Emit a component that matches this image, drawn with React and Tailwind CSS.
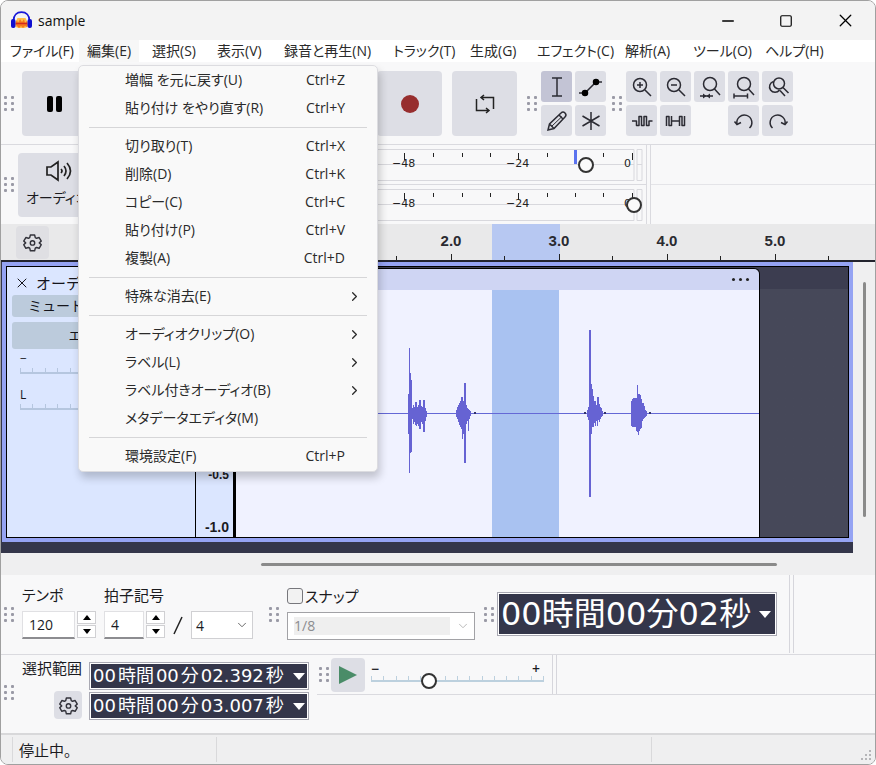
import { Fragment } from "react";
import { ChevronDown, ChevronRight, Minus, Square, X } from "lucide-react";

const MENUS = [
    { label: "ファイル(F)", width: "w-[77px]" },
    { label: "編集(E)", width: "w-[65px]", open: true },
    { label: "選択(S)", width: "w-[65px]" },
    { label: "表示(V)", width: "w-[67px]" },
    { label: "録音と再生(N)", width: "w-[109px]" },
    { label: "トラック(T)", width: "w-[77px]" },
    { label: "生成(G)", width: "w-[67px]" },
    { label: "エフェクト(C)", width: "w-[88px]" },
    { label: "解析(A)", width: "w-[68px]" },
    { label: "ツール(O)", width: "w-[72px]" },
    { label: "ヘルプ(H)", width: "w-[72px]" },
];

const EDIT_MENU = [
    [
        { label: "増幅 を元に戻す(U)", keys: "Ctrl+Z" },
        { label: "貼り付け をやり直す(R)", keys: "Ctrl+Y" },
    ],
    [
        { label: "切り取り(T)", keys: "Ctrl+X" },
        { label: "削除(D)", keys: "Ctrl+K" },
        { label: "コピー(C)", keys: "Ctrl+C" },
        { label: "貼り付け(P)", keys: "Ctrl+V" },
        { label: "複製(A)", keys: "Ctrl+D" },
    ],
    [{ label: "特殊な消去(E)", submenu: true }],
    [
        { label: "オーディオクリップ(O)", submenu: true },
        { label: "ラベル(L)", submenu: true },
        { label: "ラベル付きオーディオ(B)", submenu: true },
        { label: "メタデータエディタ(M)" },
    ],
    [{ label: "環境設定(F)", keys: "Ctrl+P" }],
];

// [first x, [peak above, peak below] for each pixel column]
const BURSTS = [
    [172, [[19, 20], [65, 59], [40, 39], [33, 38], [5, 5], [8, 10], [6, 8], [11, 11], [11, 12], [6, 10], [8, 12], [13, 15], [13, 15], [7, 8], [6, 10], [13, 18], [13, 18], [5, 7], [2, 3]]],
    [220, [[3, 3], [6, 5], [8, 8], [10, 11], [12, 13], [16, 15], [16, 25], [12, 20], [30, 49], [30, 49], [8, 10], [5, 7], [4, 17], [3, 5], [2, 2]]],
    [351, [[3, 3], [6, 6], [83, 83], [83, 83], [29, 20], [24, 13], [17, 13], [12, 9], [12, 12], [8, 7], [16, 12], [16, 6], [9, 8], [6, 5], [5, 3], [2, 2]]],
    [395, [[12, 12], [14, 13], [15, 13], [15, 13], [15, 13], [15, 17], [28, 18], [19, 21], [19, 17], [18, 15], [14, 14], [10, 7], [10, 5], [7, 4], [3, 3], [2, 2]]],
];

function Grip() {
    return (
        <svg width="10" height="17" viewBox="0 0 10 17" className="shrink-0" fill="#9a9aa6" aria-hidden="true">
            {[1, 7, 13].map((y) => (
                <Fragment key={y}>
                    <rect x="0" y={y} width="3" height="3" rx="1" />
                    <rect x="7" y={y} width="3" height="3" rx="1" />
                </Fragment>
            ))}
        </svg>
    );
}

function BigButton({ label, children }) {
    return (
        <button aria-label={label} className="flex size-[65px] shrink-0 items-center justify-center rounded-sm bg-[#dddee5]">
            {children}
        </button>
    );
}

function ToolButton({ label, active, children }) {
    return (
        <button
            aria-label={label}
            className={`flex size-[31px] items-center justify-center rounded-[3px] ${active ? "bg-[#c3c4d5]" : "bg-[#dddee5]"}`}
        >
            <svg width="28" height="28" viewBox="0 0 28 28" fill="none" stroke="#2b2b33" strokeWidth="1.5">
                {children}
            </svg>
        </button>
    );
}

function Gear() {
    return (
        <svg width="19" height="19" viewBox="0 0 24 24" fill="none" stroke="#33333b" strokeWidth="1.8" strokeLinejoin="round">
            <path d="M9.3 2.5h5.4l.8 3.3 1.6.9 3.3-1 2.7 4.5-2.5 2.3 2.5 2.3-2.7 4.5-3.3-1-1.6.9-.8 3.3H9.3l-.8-3.3-1.6-.9-3.3 1L.9 14.800l2.5-2.3L.9 10.200l2.7-4.5 3.300 1 1.600-.9z" />
            <circle cx="12" cy="12.5" r="2.8" />
        </svg>
    );
}

function TitleBar() {
    return (
        <header className="flex h-[39px] shrink-0 items-center bg-[#f3f3f3] pl-2.5 text-[14px] text-[#111]">
            <svg width="21" height="19" viewBox="0 0 21 19" aria-hidden="true">
                <path d="M4.500 11l2-4 8 0 2 4v5l-3 1h-6l-3-1z" fill="#ffc04a" />
                <path d="M4 13l2-4 1 3 2-4 2 3 2-3 1 4 2-2 1 3-1 3-2-1-2 2-2-2-2 2-2-2z" fill="#f7791e" />
                <path d="M5 12.500h11" stroke="#d22b1e" strokeWidth="1.500" />
                <path d="M2.500 10C2.500 4 6 1.200 10.500 1.200S18.500 4 18.500 10" fill="none" stroke="#1818d8" strokeWidth="1.800" />
                <rect x="0" y="8" width="4.500" height="9" rx="2" fill="#1010d0" />
                <rect x="16.500" y="8" width="4.500" height="9" rx="2" fill="#1010d0" />
            </svg>
            <h1 className="ml-1.5 flex-1">sample</h1>
            <button aria-label="最小化" className="flex h-full w-[58px] items-center justify-center">
                <Minus size={18} strokeWidth={2} className="text-black" />
            </button>
            <button aria-label="最大化" className="flex h-full w-[58px] items-center justify-center">
                <Square size={14} strokeWidth={2} className="text-black" />
            </button>
            <button aria-label="閉じる" className="flex h-full w-[60px] items-center justify-center">
                <X size={21} strokeWidth={1.5} className="text-black" />
            </button>
        </header>
    );
}

function EditMenu() {
    return (
        <div
            role="menu"
            className="absolute top-[25px] -left-[9px] z-20 w-[300px] rounded-[5px] border border-[#dcdce0] bg-[#f9f9f9] pb-px shadow-[2px_6px_9px_rgba(0,0,0,0.2)]"
        >
            {EDIT_MENU.map((group, i) => (
                <Fragment key={i}>
                    {i > 0 && (
                        <div className="flex h-2.5 items-center px-2.5">
                            <hr className="w-full border-[#d6d6d8]" />
                        </div>
                    )}
                    {group.map((item) => (
                        <button
                            key={item.label}
                            role="menuitem"
                            className="flex h-7 w-full items-center pl-[46px] text-left"
                        >
                            <span className="flex-1">{item.label}</span>
                            {item.keys && <span className="pr-8">{item.keys}</span>}
                            {item.submenu && <ChevronRight size={15} strokeWidth={2} className="mr-[15px]" />}
                        </button>
                    ))}
                </Fragment>
            ))}
        </div>
    );
}

function MenuBar() {
    return (
        <nav className="h-[23px] shrink-0 bg-[#f8f8f9]">
            <div className="flex h-[22px] bg-white pl-[9px] text-[14px] leading-[22px] whitespace-nowrap text-[#2a2a2a] [font-feature-settings:'palt']">
                {MENUS.map((menu) => (
                    <div key={menu.label} className={`relative shrink-0 ${menu.width}`}>
                        <button className={menu.open ? "-ml-2 bg-[#f7f7f7] px-2" : ""}>{menu.label}</button>
                        {menu.open && <EditMenu />}
                    </div>
                ))}
            </div>
        </nav>
    );
}

function Transport() {
    return (
        <div className="flex h-[82px] shrink-0 items-center border-b border-[#dadadf] pl-[3px]">
            <Grip />
            <div className="ml-2 flex gap-1.5">
                <BigButton label="一時停止">
                    <svg width="16" height="16" fill="#000">
                        <rect width="6" height="16" rx="2" />
                        <rect x="9" width="6" height="16" rx="2" />
                    </svg>
                </BigButton>
                <BigButton label="再生">
                    <svg width="18" height="18" fill="#4a8c68"><path d="M0 0l18 9-18 9z" /></svg>
                </BigButton>
                <BigButton label="停止">
                    <svg width="16" height="16"><rect width="16" height="16" /></svg>
                </BigButton>
                <BigButton label="先頭へ">
                    <svg width="18" height="16"><path d="M0 0h3v16H0zM18 0v16L4 8z" /></svg>
                </BigButton>
                <BigButton label="末尾へ">
                    <svg width="18" height="16"><path d="M15 0h3v16h-3zM0 0v16l14-8z" /></svg>
                </BigButton>
                <BigButton label="録音">
                    <span className="size-[18px] rounded-full bg-[#972e2e]" />
                </BigButton>
            </div>
            <div className="ml-2.5">
                <BigButton label="ループ">
                    <svg width="20" height="20" viewBox="0 0 20 20" fill="none" stroke="#222" strokeWidth="1.500">
                        <path d="M18.500 15V3.500H6.500M9 1L6 3.500 9 6" />
                        <path d="M1.500 5v11.500h12M11 14l3 2.500-3 2.500" />
                    </svg>
                </BigButton>
            </div>
            <div className="ml-2.5"><Grip /></div>
            <div className="ml-1 grid shrink-0 grid-cols-2 gap-[3px]">
                <ToolButton label="選択ツール" active>
                    <path d="M9 5h10M9 23h10M14 5v18" />
                </ToolButton>
                <ToolButton label="エンベロープツール">
                    <path d="M2 20h6L19 9h6" />
                    <circle cx="8" cy="20" r="2.500" fill="#000" stroke="#000" />
                    <circle cx="19" cy="9" r="2.500" fill="#000" stroke="#000" />
                </ToolButton>
                <ToolButton label="描画ツール">
                    <path d="M5 23l1.500-6L18 6q2-2 4 0t0 4L11 21.500zM16 8l4 4M6.500 17l4.500 4.500" />
                    <path d="M9 19L19 9.500" strokeWidth="1" />
                </ToolButton>
                <ToolButton label="マルチツール">
                    <path d="M14 5v18M5.500 9l17 10M22.500 9l-17 10" />
                </ToolButton>
            </div>
            <div className="ml-1.5"><Grip /></div>
            <div className="ml-1 grid shrink-0 grid-cols-5 gap-[3px]">
                <ToolButton label="ズームイン">
                    <circle cx="12" cy="12" r="6.500" />
                    <path d="M17 17l6 6M9 12h6M12 9v6" />
                </ToolButton>
                <ToolButton label="ズームアウト">
                    <circle cx="12" cy="12" r="6.500" />
                    <path d="M17 17l6 6M9 12h6" />
                </ToolButton>
                <ToolButton label="選択範囲に合わせる">
                    <circle cx="14" cy="11" r="6.500" />
                    <path d="M18.500 16l5.500 6M4 23h13" />
                    <path d="M7 20.500l3.500 2.500L7 25.500zM14 20.500L10.500 23l3.500 2.500z" fill="#2b2b33" stroke="none" />
                </ToolButton>
                <ToolButton label="プロジェクトに合わせる">
                    <circle cx="14" cy="11" r="6.500" />
                    <path d="M18.500 16l5.500 6M4 23h13M4 20.500v5M17.500 20.500v5" />
                </ToolButton>
                <ToolButton label="ズーム切り替え">
                    <circle cx="15" cy="10.500" r="5.500" />
                    <path d="M19 14.500l5.500 5.500M9.500 8.500A5.500 5.500 0 1 0 15.500 17M14.500 17.500M16 17.500l5 5.500" />
                </ToolButton>
                <ToolButton label="トリム">
                    <path d="M4 14h4.500v4.500h2.500v-9h2.500v9H16v-9h2.500v9H21V14h3.500" strokeLinejoin="round" />
                </ToolButton>
                <ToolButton label="無音化">
                    <path d="M4.500 19V9.500H7v9h2.500V9M9.500 14h8M17.500 19V9.500H20v9h2.500V9" strokeLinejoin="round" />
                </ToolButton>
                <span />
                <ToolButton label="元に戻す">
                    <path d="M7 17a7.500 7.500 0 1 1 12.500 4" />
                    <path d="M4.500 14.500L7 17.500l4-2" />
                </ToolButton>
                <ToolButton label="やり直す">
                    <path d="M21 17a7.500 7.500 0 1 0-12.500 4" />
                    <path d="M23.500 14.500L21 17.500l-4-2" />
                </ToolButton>
            </div>
        </div>
    );
}

function Meter({ label, value, level }) {
    const ticks = [1, 29, 58, 87, 115, 143, 172, 200, 228, 257];
    return (
        <div className="relative h-8 w-[269px]">
            <svg width="269" height="32" viewBox="0 0 269 32" fill="none" className="font-['DejaVu_Sans',sans-serif]">
                <path d="M0 .500h258v31H0M0 15.500h258M261 .500h5v31h-5zM261 15.500h5" stroke="#d8d8dd" />
                {ticks.map((x, i) => (
                    <path key={x} d={`M${x - 0.5} 4v${[1, 5, 9].includes(i) ? 7 : 4}`} stroke="#222" />
                ))}
                {level && <path d="M199.500 1v14" stroke="#5b73ef" strokeWidth="3" />}
                <g fill="#222" fontSize="11">
                    <text x="16" y="18">−48</text>
                    <text x="130" y="18">−24</text>
                    <text x="248" y="18">0</text>
                </g>
            </svg>
            <input
                type="range"
                aria-label={label}
                min="0"
                max="100"
                defaultValue={value}
                className="absolute inset-x-0 top-2 h-4 w-full appearance-none bg-transparent [&::-webkit-slider-thumb]:size-4 [&::-webkit-slider-thumb]:appearance-none [&::-webkit-slider-thumb]:rounded-full [&::-webkit-slider-thumb]:border-2 [&::-webkit-slider-thumb]:border-[#333] [&::-webkit-slider-thumb]:bg-[#fafafa]"
            />
        </div>
    );
}

function MeterBar() {
    return (
        <div className="flex h-[79px] shrink-0">
            <div className="flex w-[375px] items-center pl-[3px]">
                <Grip />
                <button className="ml-1 flex h-16 w-28 flex-col items-start justify-center gap-1 rounded-sm bg-[#dddee5] pl-2 text-[14px] leading-6 whitespace-nowrap [font-feature-settings:'palt']">
                    <svg width="28" height="22" viewBox="0 0 28 22" fill="none" stroke="#222" strokeWidth="1.700" className="ml-[19px]">
                        <path d="M2 7h4l7-5v18l-7-5H2zM16 9q2 2 0 4M19 6q4 5 0 10M22 3q7 8 0 16" />
                    </svg>
                    オーディオ設定
                </button>
            </div>
            <div className="flex w-[275px] flex-col border-r border-[#dadadf]">
                <div className="mr-[3px] flex flex-1 items-center border-r border-b border-[#dadadf]">
                    <Meter label="録音レベル" value="80" level />
                </div>
                <div className="mr-[3px] flex flex-1 items-center border-r border-[#dadadf]">
                    <Meter label="再生レベル" value="99" />
                </div>
            </div>
            <div className="flex-1">
                <div className="h-10 border-b border-[#e4e4e8]" />
            </div>
        </div>
    );
}

function TimeRuler() {
    return (
        <div className="relative flex h-[38px] shrink-0 overflow-hidden border-b-2 border-[#22232d] bg-[#e9e9ea]">
            <div className="flex w-[180px] shrink-0 items-center pl-[15px]">
                <button aria-label="タイムライン設定" className="flex size-[33px] items-center justify-center rounded-sm bg-[#dfdfe3]">
                    <Gear />
                </button>
            </div>
            <div className="absolute inset-y-0 left-[491px] w-[68px] bg-[#b7c8f2]" />
            {["", "", "2.0", "3.0", "4.0", "5.0"].map((second, i) => (
                <div key={i} className="relative flex w-[108px] shrink-0 flex-col items-center justify-end gap-[5px] font-['Liberation_Sans',sans-serif] text-[15px] leading-4 font-bold text-[#2a2a30]">
                    {second}
                    <span className="flex w-full items-end justify-between">
                        <i className="w-px" />
                        <i className="h-1.5 w-px bg-[#222]" />
                        <i className="h-1 w-px bg-[#222]" />
                    </span>
                </div>
            ))}
        </div>
    );
}

function PanelSlider({ children }) {
    return (
        <div className="h-9 px-2 text-[12px] leading-3">
            {children}
            <div className="mt-[3px] flex h-1.5 justify-between border-b-2 border-[#b5c6df]">
                {[0, 1, 2, 3, 4, 5, 6, 7, 8, 9, 10, 11, 12, 13].map((n) => (
                    <i key={n} className="h-1 w-px bg-[#b5c6df]" />
                ))}
            </div>
        </div>
    );
}

function TrackPanel() {
    return (
        <aside className="w-[189px] shrink-0 overflow-hidden border-r border-black bg-[#dbe6ff] px-[5px] pt-1 text-[15px] whitespace-nowrap text-[#15151c]">
            <div className="flex h-6 items-center gap-1.5 pl-0.5">
                <button aria-label="トラックを閉じる"><X size={16} strokeWidth={1.5} /></button>
                オーディオ
            </div>
            <div className="flex gap-0.5 text-[14px] leading-[22px]">
                <button className="flex-1 rounded-[3px] bg-[#bccbdc]">ミュート</button>
                <button aria-label="ソロ" className="flex-1 rounded-[3px] bg-[#bccbdc]" />
            </div>
            <button className="mt-[5px] mb-1 h-[27px] w-full rounded-[3px] bg-[#bccbdc] text-[13px]">エフェクト</button>
            <PanelSlider>−</PanelSlider>
            <PanelSlider>L</PanelSlider>
        </aside>
    );
}

function Waveform() {
    return (
        <svg viewBox="0 0 523 247" preserveAspectRatio="none" className="block min-h-0 w-full flex-1 bg-[#f0f2ff]" shapeRendering="crispEdges">
            <rect x="256" width="67" height="247" fill="#a9c2f1" />
            <rect y="123" width="523" height="1" fill="#6468d6" />
            {BURSTS.map(([start, peaks]) =>
                peaks.map(([up, down], i) => (
                    <rect key={start + i} x={start + i} y={123 - up} width="1" height={up + down + 1} fill="#6663d3" />
                ))
            )}
            {[238, 348, 368, 413].map((x) => (
                <rect key={x} x={x} y="122" width="2" height="2" fill="#33336b" />
            ))}
        </svg>
    );
}

function TrackArea() {
    return (
        <main className="flex min-h-[290px] flex-1 bg-[#efeff0]">
            <div className="flex min-w-0 flex-1 flex-col border-b-11 border-l border-[#34364a]">
                <div className="flex min-h-0 flex-1 border-4 border-[#95a3f3]">
                    <div className="flex min-w-0 flex-1 border border-black">
                        <TrackPanel />
                        <div className="flex w-10 shrink-0 flex-col border-r-3 border-black bg-[#dbe6ff] pt-[22px] pr-1 text-right font-['Liberation_Sans',sans-serif] text-[14px] leading-5 font-bold">
                            <span className="flex-5" />
                            <span className="flex flex-2 items-center justify-end text-[12px]">-0.5</span>
                            <span className="flex flex-1 items-end justify-end">-1.0</span>
                        </div>
                        <div className="flex min-w-0 flex-1 bg-linear-to-b from-[#3c3d50] from-[22px] to-[#464859] to-[22px] pt-px">
                            <div className="flex flex-[524] flex-col overflow-hidden rounded-tr-md border-t border-r border-black">
                                <div className="flex h-[21px] shrink-0 items-center justify-end bg-[#cfd5f3] pr-2.5">
                                    <button aria-label="クリップメニュー" className="flex gap-1">
                                        <i className="size-[3px] rounded-full bg-[#222]" />
                                        <i className="size-[3px] rounded-full bg-[#222]" />
                                        <i className="size-[3px] rounded-full bg-[#222]" />
                                    </button>
                                </div>
                                <Waveform />
                            </div>
                            <div className="flex-[88]" />
                        </div>
                    </div>
                </div>
            </div>
            <div className="flex w-[22px] shrink-0 justify-center pt-5 pb-9">
                <div className="w-[3px] rounded-full bg-[#8a8a8a]" />
            </div>
        </main>
    );
}

function Spinner({ label }) {
    return (
        <div className="flex w-[19px] flex-col gap-px">
            <button aria-label={`${label}を増やす`} className="flex h-[13px] items-center justify-center border border-[#d0d0d3] bg-white">
                <svg width="8" height="5"><path d="M0 5l4-5 4 5z" /></svg>
            </button>
            <button aria-label={`${label}を減らす`} className="flex h-[13px] items-center justify-center border border-[#d0d0d3] bg-white">
                <svg width="8" height="5"><path d="M0 0l4 5 4-5z" /></svg>
            </button>
        </div>
    );
}

function TimeBar() {
    return (
        <div className="flex h-20 shrink-0 items-center border-b border-[#dadadf] pb-px pl-[3px]">
            <Grip />
            <div className="ml-2 flex items-end pb-1.5">
                <div className="flex flex-col gap-1 text-[15px] leading-6">
                    <label htmlFor="tempo" className="[font-feature-settings:'palt']">テンポ</label>
                    <div className="flex gap-0.5">
                        <input id="tempo" defaultValue="120" className="h-7 w-[53px] border border-b-2 border-[#e0e0e3] border-b-[#8c8c90] bg-white pl-1.5 text-[14px]" />
                        <Spinner label="テンポ" />
                    </div>
                </div>
                <div className="ml-2 flex flex-col gap-1 text-[15px] leading-6">
                    <label htmlFor="beats">拍子記号</label>
                    <div className="flex gap-0.5">
                        <input id="beats" defaultValue="4" className="h-7 w-10 border border-b-2 border-[#e0e0e3] border-b-[#8c8c90] bg-white pl-1.5 text-[14px]" />
                        <Spinner label="拍子" />
                    </div>
                </div>
                <svg width="26" height="28" viewBox="0 0 26 28" aria-hidden="true">
                    <path d="M9 23l8-17" stroke="#222" strokeWidth="1.500" />
                </svg>
                <div className="relative">
                    <select aria-label="音符の長さ" className="h-7 w-[62px] appearance-none border border-[#d0d0d3] bg-white pl-1 text-[14px]">
                        <option>4</option>
                    </select>
                    <ChevronDown size={14} strokeWidth={1.5} className="pointer-events-none absolute top-[7px] right-1 text-[#555]" />
                </div>
            </div>
            <div className="ml-4"><Grip /></div>
            <div className="ml-2 flex flex-col gap-1 pb-1">
                <label className="flex h-6 items-center gap-0.5 text-[15px] [font-feature-settings:'palt']">
                    <input type="checkbox" className="size-4 appearance-none rounded-[3px] border border-[#77777c] bg-[#f2f2f2]" />
                    スナップ
                </label>
                <div className="relative flex h-7 w-[188px] border border-[#a2a2a6] bg-white px-1.5 py-1">
                    <select aria-label="スナップ単位" disabled className="w-[156px] appearance-none bg-[#efefef] text-[14px] leading-[18px] text-[#8c8c90] opacity-100">
                        <option>1/8</option>
                    </select>
                    <ChevronDown size={14} strokeWidth={1.5} className="pointer-events-none absolute top-1.5 right-1 text-[#b0b0b0]" />
                </div>
            </div>
            <div className="ml-[9px]"><Grip /></div>
            <div className="ml-[3px] shrink-0 border border-[#a9a9b3] bg-white p-px">
                <div className="flex h-10 items-center gap-1 bg-[#34364a] pr-1 pl-0.5 font-['DejaVu_Sans','Noto_Sans_CJK_JP',sans-serif] text-[32px] leading-10 whitespace-nowrap text-white">
                    <output aria-label="時間">00時間00分02秒</output>
                    <button aria-label="時間形式" className="ml-1">
                        <svg width="12" height="7" fill="#fff"><path d="M0 0h12l-6 7z" /></svg>
                    </button>
                </div>
            </div>
            <div className="ml-3 h-full w-[5px] border-x border-[#d6d6dc]" />
        </div>
    );
}

function SelectionTime({ label, seconds }) {
    return (
        <div className="border border-[#a9a9b3] bg-white p-px">
            <div className="flex h-6 w-[216px] items-center gap-0.5 bg-[#34364a] px-0.5 font-['DejaVu_Sans','Noto_Sans_CJK_JP',sans-serif] text-[18px] leading-6 whitespace-nowrap text-white">
                <output aria-label={label} className="flex flex-1 gap-0.5">
                    <span>00</span>
                    <span>時間</span>
                    <span>00</span>
                    <span>分</span>
                    <span>{seconds}</span>
                    <span>秒</span>
                </output>
                <button aria-label={`${label}の形式`}>
                    <svg width="12" height="7" fill="#fff"><path d="M0 0h12l-6 7z" /></svg>
                </button>
            </div>
        </div>
    );
}

function SelectionBar() {
    return (
        <div className="flex h-20 shrink-0 border-b-2 border-[#d8d8da] pl-[3px]">
            <div className="flex items-center pb-1"><Grip /></div>
            <div className="ml-2 flex w-[60px] flex-col items-end justify-between pt-px pb-3.5 text-[15px] leading-6">
                選択範囲
                <button aria-label="選択範囲の設定" className="flex size-7 items-center justify-center rounded-sm bg-[#dddee5]">
                    <Gear />
                </button>
            </div>
            <div className="ml-[7px] flex shrink-0 flex-col gap-[2px] pt-[7px]">
                <SelectionTime label="選択開始" seconds="02.392" />
                <SelectionTime label="選択終了" seconds="03.007" />
            </div>
            <div className="ml-2 flex h-10 flex-1 border-b border-[#dadadf]">
                <div className="flex w-[236px] items-center border-r border-[#d6d6dc] pl-0.5">
                    <Grip />
                    <button aria-label="指定速度で再生" className="ml-0.5 flex size-[34px] items-center justify-center rounded-sm bg-[#dddee5]">
                        <svg width="18" height="18" fill="#4a8c68"><path d="M0 0l18 9-18 9z" /></svg>
                    </button>
                    <div className="ml-1.5 w-[173px] pb-1">
                        <div className="flex h-2.5 justify-between pr-1 text-[14px] leading-[10px] font-semibold">
                            <span>−</span>
                            <span>+</span>
                        </div>
                        <div className="relative flex h-2 items-end justify-between border-b-2 border-[#bcd0de]">
                            {[0, 1, 2, 3, 4, 5, 6, 7, 8, 9, 10, 11, 12, 13, 14].map((n) => (
                                <i key={n} className="h-1 w-px bg-[#bcd0de]" />
                            ))}
                            <input
                                type="range"
                                aria-label="再生速度"
                                min="0"
                                max="100"
                                defaultValue="32"
                                className="absolute inset-x-0 -top-px h-4 w-full appearance-none bg-transparent [&::-webkit-slider-thumb]:size-4 [&::-webkit-slider-thumb]:appearance-none [&::-webkit-slider-thumb]:rounded-full [&::-webkit-slider-thumb]:border-2 [&::-webkit-slider-thumb]:border-[#333] [&::-webkit-slider-thumb]:bg-white"
                            />
                        </div>
                    </div>
                </div>
                <div className="ml-[3px] border-l border-[#d6d6dc]" />
            </div>
        </div>
    );
}

function StatusBar() {
    return (
        <footer className="flex h-[29px] shrink-0 bg-[#efeff0] py-0.5 pl-[11px] text-[15px] leading-[27px]">
            <div className="w-[204px] border-l border-[#d9d9db] pl-1.5">停止中。</div>
            <div className="flex-[436] border-l border-[#d9d9db]" />
            <div className="flex flex-[222] items-end justify-end border-l border-[#d9d9db] pr-0.5">
                <svg width="12" height="12" fill="#b5b5b8">
                    <path d="M8 0h2v2H8zM4 4h2v2H4zM8 4h2v2H8zM0 8h2v2H0zM4 8h2v2H4zM8 8h2v2H8z" />
                </svg>
            </div>
        </footer>
    );
}

export default function App() {
    return (
        <div className="flex min-h-screen flex-col overflow-hidden rounded-lg border border-[#a0a0a0] bg-[#f8f8f9] font-['Open_Sans','Noto_Sans_CJK_JP',sans-serif] text-[#1b1b1f]">
            <TitleBar />
            <MenuBar />
            <Transport />
            <MeterBar />
            <TimeRuler />
            <TrackArea />
            <div className="flex h-[22px] shrink-0 items-center bg-[#efeff0] pr-[98px] pl-[260px]">
                <div className="h-[3px] flex-1 rounded-full bg-[#8a8a8a]" />
            </div>
            <TimeBar />
            <SelectionBar />
            <StatusBar />
        </div>
    );
}
